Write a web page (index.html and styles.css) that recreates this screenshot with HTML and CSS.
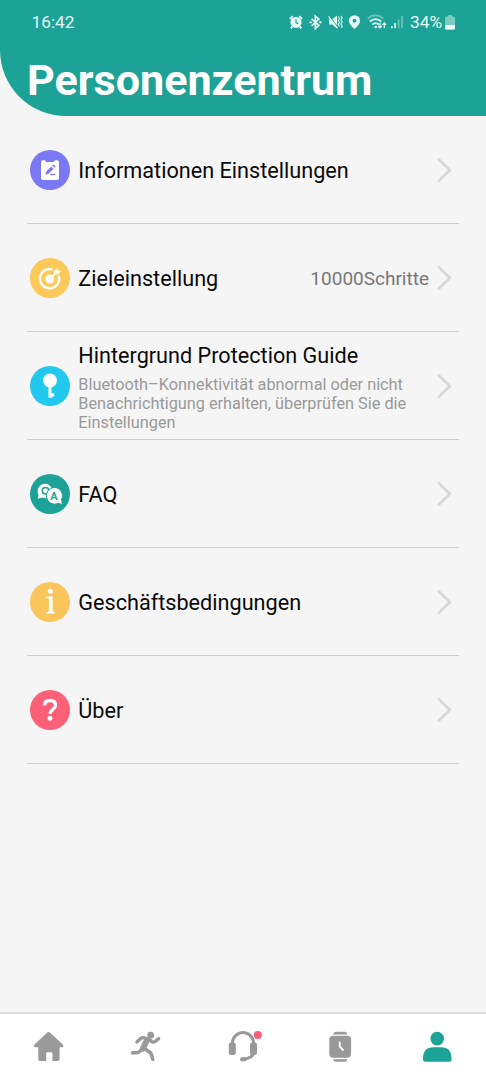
FILE: index.html
```html
<!DOCTYPE html>
<html lang="de">
<head>
<meta charset="utf-8">
<title>Personenzentrum</title>
<link rel="stylesheet" href="styles.css">
</head>
<body>
<div class="app">
  <header class="header">
    <div class="status">
      <span class="clock">16:42</span>
      <div class="indicators">
        <svg class="indicator-icons" width="117" height="18" viewBox="288 13 117 18" fill="none" stroke="#e4f8f4" stroke-width="1.5">
          <circle cx="296" cy="22.3" r="5.6" fill="#e4f8f4" stroke="none"/>
          <path d="M289.800 18.900l3-2.800M302.200 18.900l-3-2.800M292.300 26.200l-1.500 2.200M299.700 26.200l1.500 2.200" stroke-width="1.900"/>
          <path d="M296 19.400v3.200l2.200 1.100" stroke="#1ca297" stroke-width="1.200"/>
          <path d="M311.600 18.800l7.300 6.500-3.600 3.200V16.200l3.600 3.100-7.300 6.500" stroke-width="1.700"/>
          <path d="M309.500 22.300h2.300M319.300 22.300h2.300" stroke-width="1.800"/>
          <path d="M329 19.300h3.200l4.800-3.700v13l-4.800-4H329z" fill="#e4f8f4" stroke="none"/>
          <path d="M329 15.900l9 11.700" stroke="#1ca297" stroke-width="1.300"/>
          <path d="M328.500 16.300l9 11.800" stroke-width="1.300"/>
          <path d="M338.300 16.500l1.200 2-1.200 2 1.200 2-1.200 2 1.200 2M341 16l1.200 2-1.200 2 1.200 2-1.200 2 1.200 2-.7 1.800" stroke-width="1.100"/>
          <path fill="#e4f8f4" stroke="none" fill-rule="evenodd" d="M354.500 15.200a5.600 5.600 0 0 0-5.600 5.600c0 3.900 5.600 8.200 5.600 8.200s5.600-4.300 5.600-8.200a5.600 5.600 0 0 0-5.600-5.600zm0 3.600a1.900 1.900 0 1 1 0 3.800 1.900 1.900 0 0 1 0-3.800z"/>
          <path d="M367.800 18.500q7.800-6.300 15.600 0" opacity=".4" stroke-width="1.900"/>
          <path d="M369.800 21.500q5.800-4.700 11.400 0M372.300 24.500q3.300-2.700 6.500 0" stroke-width="1.800"/>
          <circle cx="375.700" cy="27" r="1.300" fill="#e4f8f4" stroke="none"/>
          <path d="M380 22.800v4.800M378.100 26l1.900 2 1.900-2M384.300 28v-5M382.400 24.800l1.900-2 1.900 2" stroke-width="1.200"/>
          <path d="M391.800 26v2.300M395.100 23.200v5.100" stroke-width="1.700"/>
          <path d="M398.600 19.400v8.900M402 16v12.300" stroke-width="1.700" opacity=".4"/>
        </svg>
        <span class="percent">34%</span>
        <svg width="10" height="15" viewBox="0 0 10 15"><path d="M3 0h4v1.500h1.500Q10 1.500 10 3v10q0 1.500-1.500 1.500h-7Q0 14.500 0 13V3q0-1.500 1.500-1.500H3z" fill="#7bcbc3"/><path d="M0 10h10v3q0 1.500-1.500 1.500h-7Q0 14.500 0 13z" fill="#f0fffc"/></svg>
      </div>
    </div>
    <h1 class="title">Personenzentrum</h1>
  </header>

  <main class="menu">
    <div class="row">
      <svg class="badge" viewBox="0 0 40 40"><circle cx="20" cy="20" r="20" fill="#7b78f5"/><path fill="#fff" d="M12.700 10.200h1.800q.8 0 1 .8.300 1 1.300 1h6.400q1 0 1.300-1 .2-.8 1-.8h1.800q1.700 0 1.700 1.700v16.400q0 1.700-1.700 1.700H12.700q-1.700 0-1.700-1.700V11.900q0-1.700 1.700-1.700z"/><path d="M15.300 24.700l1-3.200 5-5 2.200 2.200-5 5zM22.200 15.600l1.300-1.200 2.200 2.100-1.300 1.300z" fill="#7b78f5"/><path d="M20.200 24.500h5" stroke="#7b78f5" stroke-width="1.300"/></svg>
      <div class="label">Informationen Einstellungen</div>
      <svg class="chevron" viewBox="0 0 16 26"><path d="M2 1.500L14 13 2 24.500"/></svg>
    </div>
    <div class="row">
      <svg class="badge" viewBox="0 0 40 40"><circle cx="20" cy="20" r="20" fill="#fdc958"/><path d="M22.500 11.500A9.600 9.600 0 1 0 28.700 17.700" fill="none" stroke="#fff" stroke-width="2.500"/><circle cx="19.700" cy="21" r="4.500" fill="#fff"/><path d="M20 20.700l7-7" stroke="#fff" stroke-width="1.900"/><path d="M23.900 16.200v-2.900l3.900-3.900.5 3.200 3.200.5-3.800 3.500z" fill="#fff"/></svg>
      <div class="label">Zieleinstellung</div>
      <span class="value">10000Schritte</span>
      <svg class="chevron" viewBox="0 0 16 26"><path d="M2 1.500L14 13 2 24.500"/></svg>
    </div>
    <div class="row">
      <svg class="badge" viewBox="0 0 40 40"><circle cx="20" cy="20" r="20" fill="#23c8ef"/><circle cx="20" cy="14.500" r="6.900" fill="#fff"/><path d="M18.500 20h3v5.500h-.2v1.700h3v3.200h-2.200v1.300h-3.600z" fill="#fff"/></svg>
      <div class="label label-detailed">Hintergrund Protection Guide<p class="description">Bluetooth–Konnektivität abnormal oder nicht<br>Benachrichtigung erhalten, überprüfen Sie die<br>Einstellungen</p></div>
      <svg class="chevron" viewBox="0 0 16 26"><path d="M2 1.500L14 13 2 24.500"/></svg>
    </div>
    <div class="row">
      <svg class="badge" viewBox="0 0 40 40"><circle cx="20" cy="20" r="20" fill="#1ca297"/><path d="M7.700 24.800l.8-4.300A7.300 7.300 0 1 1 16 24.300l-3.800-.8z" fill="#fff"/><circle cx="15.500" cy="16.700" r="3.200" fill="none" stroke="#1ca297" stroke-width="1.500"/><path d="M24 13.400a8.400 8.400 0 0 1 7.500 12.300l1 4.800-4.500-1a8.400 8.400 0 1 1-4-16.100z" fill="#fff" stroke="#1ca297" stroke-width="1"/><text x="24" y="26" text-anchor="middle" class="faq-letter">A</text></svg>
      <div class="label">FAQ</div>
      <svg class="chevron" viewBox="0 0 16 26"><path d="M2 1.500L14 13 2 24.500"/></svg>
    </div>
    <div class="row">
      <svg class="badge" viewBox="0 0 40 40"><circle cx="20" cy="20" r="20" fill="#fac65b"/><circle cx="20.400" cy="9.300" r="2.500" fill="#fff"/><path d="M16.300 14.700l6.300-.7v14.800q0 1 1 1.200l1.300.3v1.100h-8.600v-1.100l1.500-.3q1.100-.2 1.100-1.200V17.200q0-1-1-1.200l-1.600-.2z" fill="#fff"/></svg>
      <div class="label">Geschäftsbedingungen</div>
      <svg class="chevron" viewBox="0 0 16 26"><path d="M2 1.500L14 13 2 24.500"/></svg>
    </div>
    <div class="row">
      <svg class="badge" viewBox="0 0 40 40"><circle cx="20" cy="20" r="20" fill="#fe6078"/><path d="M14.500 15.400q.3-4.900 5.600-4.900 5.400 0 5.400 4.700 0 2.300-2.800 4.400-2.700 2-2.700 4.400" fill="none" stroke="#fff" stroke-width="3.300"/><circle cx="19.900" cy="28.300" r="2.500" fill="#fff"/></svg>
      <div class="label">Über</div>
      <svg class="chevron" viewBox="0 0 16 26"><path d="M2 1.500L14 13 2 24.500"/></svg>
    </div>
  </main>

  <nav class="tabs">
    <div class="tab"><svg viewBox="0 0 34 34"><path fill="#999" d="M15 2.700q1.600-1.200 3.200 0l12.600 11.700q1.300 1.400.3 2.300-.5.500-1.600.5H27.600v12.100q0 1.700-1.700 1.700h-5.500v-7.700q0-1-1-1h-4.200q-1 0-1 1V31H8q-1.700 0-1.700-1.700V17.200H3.600q-1.400 0-1.800-1-.2-1 .7-1.800z"/></svg></div>
    <div class="tab"><svg viewBox="0.6 0 34 34" fill="none" stroke="#999" stroke-linecap="round" stroke-linejoin="round"><circle cx="22.300" cy="5.200" r="3.400" fill="#999" stroke="none"/><path d="M8.500 12l3.700-3.500q1.500-1.200 3.500-.6l5.500 1.900 1.800 1.700q1.700 1.300 3.400.2l3.900-3.100" stroke-width="3.300"/><path d="M18.500 10.500l-4 8" stroke-width="6"/><path d="M14 19l-3.500 3q-1 .9-2.500.8H4" stroke-width="3.400"/><path d="M15 18l6.500 4.300q1 .7 1.400 1.900l1.500 5" stroke-width="3.600"/></svg></div>
    <div class="tab"><svg viewBox="0 0 34 34"><path d="M6.500 14V13a10.500 10.500 0 0 1 21 0v1M27.700 22q-.8 6.300-10.500 7.200" fill="none" stroke="#999" stroke-width="3"/><rect x="2.800" y="12.500" width="7" height="12.500" rx="2.200" fill="#999"/><rect x="24" y="12.500" width="7" height="12.500" rx="2.200" fill="#999"/><ellipse cx="17.300" cy="29.300" rx="3.200" ry="2.200" fill="#999"/><circle cx="31.800" cy="5" r="4.100" fill="#f9607b"/></svg></div>
    <div class="tab"><svg viewBox="0 0 34 34"><path d="M10 4.400q.5-2.600 3-2.600h8.500q2.500 0 3 2.600zM10 29.200q.5 2.600 3 2.600h8.500q2.500 0 3-2.600z" fill="#999"/><rect x="6.300" y="5.700" width="21.800" height="22" rx="4" fill="#999"/><path d="M16.700 11.700v4.700l3.700 4.100" fill="none" stroke="#fff" stroke-width="1.900"/></svg></div>
    <div class="tab"><svg viewBox="0 0 34 34" fill="#1ca297"><circle cx="17.200" cy="8.600" r="6.800"/><path d="M3 29.500v-1q0-11.300 10.500-11.300h7.500q10.500 0 10.500 11.300v1q0 2.300-2.300 2.300H5.300Q3 31.800 3 29.500z"/></svg></div>
  </nav>
</div>
</body>
</html>
```

FILE: styles.css
```css
* { box-sizing: border-box; }

body {
  margin: 0;
  background: #f5f5f5;
  font-family: Roboto, "Noto Sans", sans-serif;
  color: #0a0a0a;
}

.app {
  display: flex;
  flex-direction: column;
  height: 1080px;
  overflow: hidden;
}

.header {
  height: 116px;
  flex: none;
  padding: 12px 31px 0 27px;
  background: #1ca297;
  border-bottom-left-radius: 66px;
  color: #fff;
}

.status {
  display: flex;
  justify-content: space-between;
  height: 20px;
  align-items: center;
  padding-left: 4.500px;
  color: #e4f8f4;
  font-size: 17.3px;
  line-height: 20px;
}

.indicators { display: flex; align-items: center; }
.indicator-icons { margin-right: 5px; }
.percent { width: 35px; white-space: nowrap; }

.title {
  margin: 23px 0 0;
  font-size: 43.1px;
  font-weight: 700;
  line-height: 52px;
  white-space: nowrap;
}

.menu { flex: 1; padding: 0 27px; }

.row {
  display: flex;
  align-items: center;
  height: 108px;
  padding: 0 7px 0 3px;
  border-bottom: 1px solid #d0d0d0;
}

.badge { width: 40px; height: 40px; flex: none; }

.label {
  flex: 1;
  margin-left: 8.300px;
  padding-top: 2px;
  font-size: 21.65px;
  line-height: 26px;
  white-space: nowrap;
}

.label-detailed { padding-top: 3px; }

.description {
  margin: 6px 0 0;
  color: #999;
  font-size: 16.3px;
  line-height: 19px;
}

.value {
  margin-right: 7px;
  padding-top: 2px;
  color: #777;
  font-size: 19px;
}

.chevron { width: 16px; height: 26px; flex: none; }
.chevron path { fill: none; stroke: #d7d7d7; stroke-width: 2.5; }

.faq-letter { font: 700 11px Roboto, sans-serif; fill: #1ca297; }

.tabs {
  flex: none;
  display: grid;
  grid-template-columns: repeat(5, 1fr);
  height: 68px;
  border-top: 2px solid #dfdfdf;
  background: #fff;
}

.tab { display: flex; justify-content: center; padding-top: 16px; }
.tab svg { width: 34px; height: 34px; overflow: visible; }
```
